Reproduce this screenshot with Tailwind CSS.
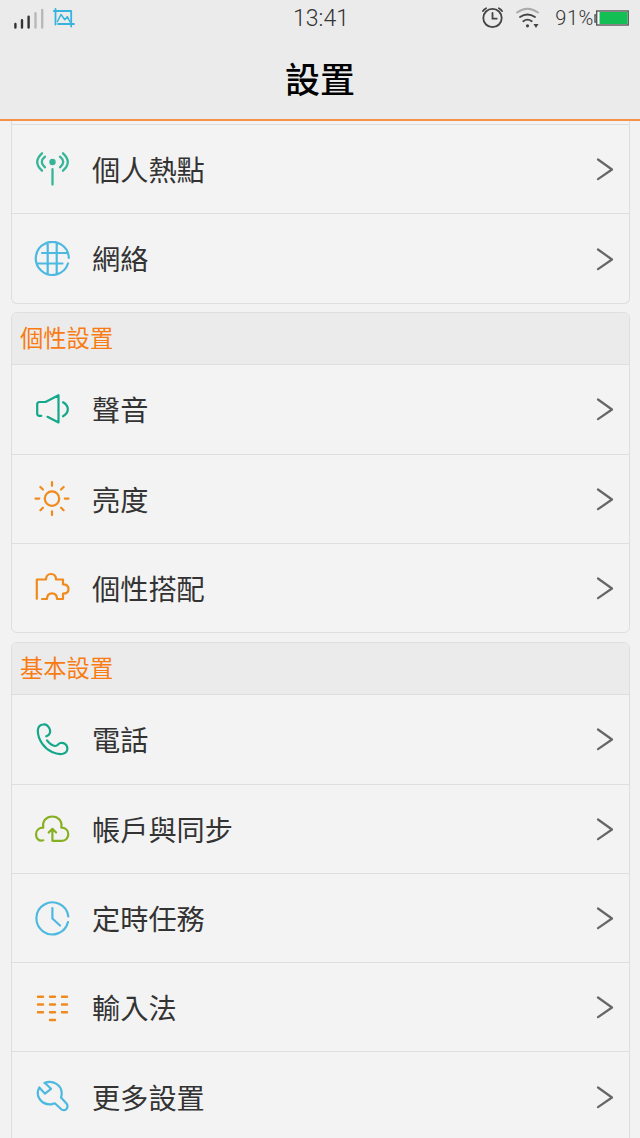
<!DOCTYPE html>
<html lang="zh-Hant">
<head>
    <meta charset="utf-8">
    <title>設置</title>
    <script src="https://cdn.jsdelivr.net/npm/@tailwindcss/browser@4"></script>
</head>
<body class="bg-[#f2f2f2] font-['Noto_Sans_CJK_TC',sans-serif] text-[#333]">
<div class="flex flex-col h-[1138px] overflow-hidden">
    <!-- Header -->
    <header class="shrink-0 h-[121px] bg-[#ebebeb] border-b-2 border-[#f5924a]">
        <div class="grid grid-cols-3 h-9 items-center pl-[13px] pr-[11px] font-['Roboto',sans-serif]">
            <div class="flex items-center gap-[10px]">
                <svg class="w-[31px] h-[22px]" viewBox="0 0 31 22" fill="none" stroke="#333" stroke-width="2.4" stroke-linecap="round">
                    <path d="M2.4 17v3.5M9 13.3V20.5M15.6 9.8V20.5"></path>
                    <path d="M22.5 6.2V20.5M29.2 3V20.5" stroke="#b8b8b8"></path>
                </svg>
                <svg class="w-[22px] h-[22px] -ml-px" viewBox="0 0 22 22" fill="none" stroke="#36b4de" stroke-width="1.8" stroke-linecap="round" stroke-linejoin="round">
                    <path d="M0.8 4h17.4v15.5M2.5 2v15.5M5 17H21"></path>
                    <path d="M4.5 14.5l3.5-7 3.8 5.2 2.5-3 2.8 5.3" stroke-width="1.5"></path>
                </svg>
            </div>
            <div class="text-center text-[23px] leading-none font-light">13:41</div>
            <div class="flex items-center justify-end">
                <svg class="w-6 h-6 mr-3" viewBox="0 0 24 24" fill="none" stroke="#444" stroke-width="1.8" stroke-linecap="round">
                    <circle cx="12.5" cy="12" r="9.2"></circle>
                    <path d="M12.5 7v5.7h4.2"></path>
                    <path d="M2.8 5.2q1.3-2 3.4-3M22.2 5.2q-1.3-2-3.4-3" stroke-width="1.6"></path>
                </svg>
                <svg class="w-6 h-6 mr-[15px]" viewBox="0 0 24 24" fill="none" stroke="#444" stroke-width="1.8" stroke-linecap="round">
                    <path d="M1 6.5q10.5-7.5 21 0" stroke="#aaa"></path>
                    <path d="M4 11q7.5-5 15 0M7.3 15.3q4.2-3.2 8.4 0"></path>
                    <circle cx="11.5" cy="19.8" r="1.6" fill="#444" stroke="none"></circle>
                    <path d="M17.5 18h5l-2.5 4z" fill="#444" stroke="none"></path>
                </svg>
                <span class="text-[20px] leading-none font-light tracking-[0.6px]">91%</span>
                <svg class="w-[35px] h-4 -mt-px" viewBox="0 0 35 16" fill="none">
                    <path d="M2.5 5H1v7h1.5" stroke="#555" stroke-width="1.4"></path>
                    <rect x="2.7" y="1" width="31.5" height="14" fill="#fff" stroke="#555" stroke-width="1.4"></rect>
                    <path d="M5.5 2h28v12h-28z" fill="#13bf55"></path>
                </svg>
            </div>
        </div>
        <h1 class="h-[83px] flex items-center justify-center text-[35px] leading-none font-medium text-black">設置</h1>
    </header>

    <!-- Settings list -->
    <main class="flex-1 flex flex-col gap-[9px] pl-[11px] pr-[10px]">
        <section class="shrink-0 border border-t-0 border-[#dedede] rounded-b-md bg-[#f3f3f3]">
            <div class="h-1 border-b border-[#dedede]"></div>
            <div class="flex items-center h-[89.3px] pl-[22px] pr-[15px] border-b border-[#dedede]">
                <svg class="w-9 h-9" viewBox="0 0 36 36" fill="none" stroke="#35b597" stroke-width="2.3" stroke-linecap="round">
                    <circle cx="18.5" cy="11" r="3.2" fill="#35b597" stroke="none"></circle>
                    <path d="M18.5 18.2v15.3M11 5.7q-6.4 5.3 0 10.6M8 2.3Q-1.6 11 8 19.7M26 5.7q6.4 5.3 0 10.6M29 2.3Q38.6 11 29 19.7"></path>
                </svg>
                <span class="ml-[22px] flex-1 text-[28.2px] leading-none">個人熱點</span>
                <svg class="w-[18px] h-6" viewBox="0 0 18 24" fill="none" stroke="#666" stroke-width="2.2" stroke-linecap="round" stroke-linejoin="round"><path d="M2 2.5l14 10-14 9.7"></path></svg>
            </div>
            <div class="flex items-center h-[88.6px] pl-[22px] pr-[15px]">
                <svg class="w-9 h-9" viewBox="0 0 36 36" fill="none" stroke="#4db9e0" stroke-width="2.2" stroke-linecap="round">
                    <path d="M34.8 17A16.5 16.5 0 1 0 34 22.5M13.7 1.7v31M22.7 1.7v31M8 12h25M3 22.5h25.5"></path>
                </svg>
                <span class="ml-[22px] flex-1 text-[28.2px] leading-none">網絡</span>
                <svg class="w-[18px] h-6" viewBox="0 0 18 24" fill="none" stroke="#666" stroke-width="2.2" stroke-linecap="round" stroke-linejoin="round"><path d="M2 2.5l14 10-14 9.7"></path></svg>
            </div>
        </section>

        <section class="shrink-0 -mt-[0.6px] border border-[#dedede] rounded-md bg-[#f3f3f3]">
            <h2 class="flex items-center h-[52px] pl-2 pb-[3px] rounded-t-md bg-[#ebebeb] border-b border-[#dedede] text-[23.3px] leading-none text-[#f97c13]">個性設置</h2>
            <div class="flex items-center h-[89.3px] pl-[22px] pr-[15px] border-b border-[#dedede]">
                <svg class="w-9 h-9" viewBox="0 0 36 36" fill="none" stroke="#14a78a" stroke-width="2.2" stroke-linecap="round" stroke-linejoin="round">
                    <path d="M7.3 24.8H5.5Q3.2 24.8 3.2 22.5V13.5Q3.2 11 5.5 11H11.5L24.5 4.2V31.5L13.5 25.8M29 11.3Q33.8 14 33.8 18.2T29 25.3"></path>
                </svg>
                <span class="ml-[22px] flex-1 text-[28.2px] leading-none">聲音</span>
                <svg class="w-[18px] h-6" viewBox="0 0 18 24" fill="none" stroke="#666" stroke-width="2.2" stroke-linecap="round" stroke-linejoin="round"><path d="M2 2.5l14 10-14 9.7"></path></svg>
            </div>
            <div class="flex items-center h-[89.3px] pl-[22px] pr-[15px] border-b border-[#dedede]">
                <svg class="w-9 h-9" viewBox="0 0 36 36" fill="none" stroke="#f08a1c" stroke-width="2.2" stroke-linecap="round">
                    <circle cx="18" cy="17.6" r="7.2"></circle>
                    <path d="M18 1.1v3.7M18 30.3v3.8M1.5 17.6h3.7M30.8 17.6h3.7M6.4 6l2.5 2.5M27.1 26.7l2.5 2.5M29.6 6l-2.5 2.5M8.9 26.7l-2.5 2.5"></path>
                </svg>
                <span class="ml-[22px] flex-1 text-[28.2px] leading-none">亮度</span>
                <svg class="w-[18px] h-6" viewBox="0 0 18 24" fill="none" stroke="#666" stroke-width="2.2" stroke-linecap="round" stroke-linejoin="round"><path d="M2 2.5l14 10-14 9.7"></path></svg>
            </div>
            <div class="flex items-center h-[88.4px] pl-[22px] pr-[15px]">
                <svg class="w-9 h-9" viewBox="0 0 36 36" fill="none" stroke="#f08a1c" stroke-width="2.2" stroke-linecap="round" stroke-linejoin="round">
                    <path d="M2.8 28.8V9.5H12C12 6 14 4 17 4S22 6 22 9.5H29V14.3C32.5 14.3 34.5 16.3 34.5 19S32.5 23.7 29 23.7V29H23C23 25.5 21 23.3 18 23.3S13 25.5 13 29H8"></path>
                </svg>
                <span class="ml-[22px] flex-1 text-[28.2px] leading-none">個性搭配</span>
                <svg class="w-[18px] h-6" viewBox="0 0 18 24" fill="none" stroke="#666" stroke-width="2.2" stroke-linecap="round" stroke-linejoin="round"><path d="M2 2.5l14 10-14 9.7"></path></svg>
            </div>
        </section>

        <section class="shrink-0 border border-[#dedede] rounded-t-md bg-[#f3f3f3]">
            <h2 class="flex items-center h-[52px] pl-2 pb-[3px] rounded-t-md bg-[#ebebeb] border-b border-[#dedede] text-[23.3px] leading-none text-[#f97c13]">基本設置</h2>
            <div class="flex items-center h-[89.3px] pl-[22px] pr-[15px] border-b border-[#dedede]">
                <svg class="w-9 h-9" viewBox="0 0 36 36" fill="none" stroke="#14a78a" stroke-width="2.2" stroke-linecap="round" stroke-linejoin="round">
                    <path d="M12.3 15.3C16 14 17 10.5 15.5 7.5C14 4.5 11.5 3 9 3.5C5.5 4 3.8 6.500 3.8 10C4 19 10.5 27.5 18 31C22 32.8 26 33.5 29 32.7C32 32 33.7 29.5 33.3 26.5C32.8 23 29.5 21.5 26.5 22C24.5 22.3 23.5 25 21.5 25C18.5 24.5 15 22 13 19.3"></path>
                </svg>
                <span class="ml-[22px] flex-1 text-[28.2px] leading-none">電話</span>
                <svg class="w-[18px] h-6" viewBox="0 0 18 24" fill="none" stroke="#666" stroke-width="2.2" stroke-linecap="round" stroke-linejoin="round"><path d="M2 2.5l14 10-14 9.7"></path></svg>
            </div>
            <div class="flex items-center h-[89.3px] pl-[22px] pr-[15px] border-b border-[#dedede]">
                <svg class="w-9 h-9" viewBox="0 0 36 36" fill="none" stroke="#86b022" stroke-width="2.2" stroke-linecap="round" stroke-linejoin="round">
                    <path d="M9.3 29.3C5 30.7 2 27.5 2 23.5C2 19.5 5 16.7 9.3 16.7C8 10 12.5 5.5 18.3 5.5S28.5 10 27.3 16.7C31.5 16.7 34.3 19.5 34.3 23.3S31.5 29.8 28 29.8H18.4V18M14.7 21.5L18.4 17.8L22.1 21.5"></path>
                </svg>
                <span class="ml-[22px] flex-1 text-[28.2px] leading-none">帳戶與同步</span>
                <svg class="w-[18px] h-6" viewBox="0 0 18 24" fill="none" stroke="#666" stroke-width="2.2" stroke-linecap="round" stroke-linejoin="round"><path d="M2 2.5l14 10-14 9.7"></path></svg>
            </div>
            <div class="flex items-center h-[89.3px] pl-[22px] pr-[15px] border-b border-[#dedede]">
                <svg class="w-9 h-9" viewBox="0 0 36 36" fill="none" stroke="#4db9e0" stroke-width="2.2" stroke-linecap="round" stroke-linejoin="round">
                    <path d="M34.3 16.5A16 16 0 1 0 34 22M18.4 8v10.5l7.6 7"></path>
                </svg>
                <span class="ml-[22px] flex-1 text-[28.2px] leading-none">定時任務</span>
                <svg class="w-[18px] h-6" viewBox="0 0 18 24" fill="none" stroke="#666" stroke-width="2.2" stroke-linecap="round" stroke-linejoin="round"><path d="M2 2.5l14 10-14 9.7"></path></svg>
            </div>
            <div class="flex items-center h-[89.3px] pl-[22px] pr-[15px] border-b border-[#dedede]">
                <svg class="w-9 h-9" viewBox="0 0 36 36" fill="none" stroke="#f08a1c" stroke-width="2.4" stroke-linecap="round">
                    <path d="M4 7.8h5M16 7.8h5M28 7.8h5M4 15.5h5M16 15.5h5M28 15.5h5M4 23.3h5M16 23.3h5M28 23.3h5M16 31h5"></path>
                </svg>
                <span class="ml-[22px] flex-1 text-[28.2px] leading-none">輸入法</span>
                <svg class="w-[18px] h-6" viewBox="0 0 18 24" fill="none" stroke="#666" stroke-width="2.2" stroke-linecap="round" stroke-linejoin="round"><path d="M2 2.5l14 10-14 9.7"></path></svg>
            </div>
            <div class="flex items-center h-[89.3px] pl-[22px] pr-[15px] border-b border-[#dedede]">
                <svg class="w-9 h-9" viewBox="0 0 36 36" fill="none" stroke="#4db9e0" stroke-width="2.2" stroke-linecap="round" stroke-linejoin="round">
                    <path d="M10.5 4C19 .5 28 6.5 27.7 14.5Q27.7 16.5 27 18.5L32.5 24.5C35.3 28.5 31.3 33 27.3 30.3L20.8 24.3Q19 25 17 25.3C8 26 .5 17.5 5.3 8.5L11 14.7L17 9.8L12 5"></path>
                </svg>
                <span class="ml-[22px] flex-1 text-[28.2px] leading-none">更多設置</span>
                <svg class="w-[18px] h-6" viewBox="0 0 18 24" fill="none" stroke="#666" stroke-width="2.2" stroke-linecap="round" stroke-linejoin="round"><path d="M2 2.5l14 10-14 9.7"></path></svg>
            </div>
        </section>
    </main>
</div>
</body>
</html>
